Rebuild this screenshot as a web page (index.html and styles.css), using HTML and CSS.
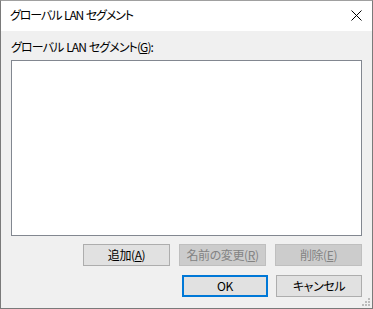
FILE: index.html
```html
<!DOCTYPE html>
<html>
  <head>
    <meta charset="utf-8">
    <link rel="stylesheet" href="styles.css">
  </head>
  <body>
    <div class="window">
      <div class="titlebar">
        <span class="title">グローバル LAN セグメント</span>
        <svg class="close" width="11" height="11" viewBox="0 0 11 11">
          <path d="M0.5 0.5 L10.5 10.5 M10.5 0.5 L0.5 10.5" stroke="#000" stroke-width="1" fill="none"/>
        </svg>
      </div>
      <div class="content">
        <div class="label">グローバル LAN セグメント(<u>G</u>):</div>
        <div class="listbox"></div>
        <div class="row row-edit">
          <button class="btn">追加(<u>A</u>)</button>
          <button class="btn" disabled>名前の変更(<u>R</u>)</button>
          <button class="btn" disabled>削除(<u>E</u>)</button>
        </div>
        <div class="row row-ok">
          <button class="btn btn-default">OK</button>
          <button class="btn">キャンセル</button>
        </div>
        <svg class="grip" width="8" height="8" viewBox="0 0 8 8">
          <rect x="6" y="0" width="2" height="2" fill="#bcbcbc"/>
          <rect x="3" y="3" width="2" height="2" fill="#bcbcbc"/>
          <rect x="6" y="3" width="2" height="2" fill="#bcbcbc"/>
          <rect x="0" y="6" width="2" height="2" fill="#bcbcbc"/>
          <rect x="3" y="6" width="2" height="2" fill="#bcbcbc"/>
          <rect x="6" y="6" width="2" height="2" fill="#bcbcbc"/>
        </svg>
      </div>
    </div>
  </body>
</html>
```

FILE: styles.css
```css
body { margin: 0; font-family: "Noto Sans CJK JP", "Noto Sans", sans-serif; font-size: 12px; color: #000; font-feature-settings: "palt" }
.window { width: 373px; height: 309px; box-sizing: border-box; border: 1px solid #7a7a7a; border-top-color: #a0a0a0; display: flex; flex-direction: column }
.titlebar { height: 30px; background: #fff; display: flex; align-items: center; justify-content: space-between; padding: 0 10px 0 9px }
.title { line-height: 16px; margin-top: -2px; letter-spacing: -1.1px; word-spacing: 1px }
.close { display: block; margin-top: -1px }
.content { flex: 1; background: #f0f0f0; padding: 8px 10px 0 10px; position: relative }
.label { height: 16px; line-height: 16px; margin-bottom: 5px; letter-spacing: -0.9px; word-spacing: 1px }
.listbox { height: 176px; box-sizing: border-box; background: #fff; border: 1px solid #828790 }
.row { display: flex; justify-content: flex-end }
.row-edit { margin-top: 8px; gap: 9px }
.row-ok { margin-top: 9px; gap: 8px }
.btn { font-family: inherit; font-feature-settings: "palt"; font-size: 12px; letter-spacing: -0.4px; height: 22px; width: 87px; box-sizing: border-box; background: #e1e1e1; border: 1px solid #adadad; padding: 0; margin: 0; line-height: 18px; color: #000 }
.btn:disabled { background: #cccccc; border-color: #bfbfbf; color: #838383 }
.row-ok .btn { width: 86px }
.btn-default { border: 2px solid #0078d7 }
.btn u { text-underline-offset: 1px }
.grip { position: absolute; right: 2px; bottom: 2px }
```
